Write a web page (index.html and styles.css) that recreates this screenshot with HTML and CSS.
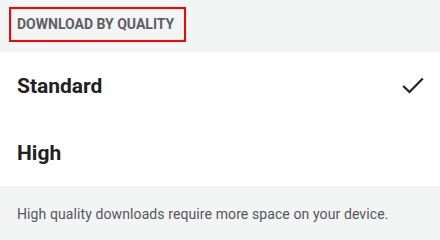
FILE: index.html
```html
<!DOCTYPE html>
<html>
<head>
<meta charset="utf-8">
<link rel="stylesheet" href="styles.css">
</head>
<body>
<div class="page">
  <div class="section-header">
    <span class="section-title">DOWNLOAD BY QUALITY</span>
  </div>
  <ul class="options">
    <li class="option">
      <span class="option-label">Standard</span>
      <svg class="check" width="22" height="17" viewBox="0 0 22 17"><path d="M1.2 9 L7.5 15 L20.8 1.5" fill="none" stroke="#1f2124" stroke-width="2.2"/></svg>
    </li>
    <li class="option">
      <span class="option-label">High</span>
    </li>
  </ul>
  <div class="footer">
    <p class="note">High quality downloads require more space on your device.</p>
  </div>
</div>
</body>
</html>
```
FILE: styles.css
```css
* { box-sizing: border-box; }
html, body { margin: 0; padding: 0; }
body {
  width: 440px;
  height: 238px;
  background: #f3f4f4;
  font-family: Roboto, "Liberation Sans", sans-serif;
  overflow: hidden;
}
.page { display: flex; flex-direction: column; }
.section-header {
  height: 52px;
  background: #f3f4f4;
  padding: 7px 0 0 9px;
}
.section-title {
  display: inline-block;
  border: 2px solid #ff0000;
  height: 35px;
  width: 177px;
  padding: 0 0 0 6px;
  line-height: 31px;
  font-size: 14px;
  font-weight: 700;
  color: #5d6063;
}
.options { list-style: none; margin: 0; padding: 0; background: #fff; }
.option {
  height: 67px;
  display: flex;
  align-items: center;
  justify-content: space-between;
  padding: 0 16px 0 17px;
}
.option-label {
  font-size: 21px;
  font-weight: 700;
  color: #1f2124;
}
.check { display: block; }
.footer { padding: 18px 17px; }
.note {
  margin: 0;
  font-size: 14px;
  color: #55585b;
  line-height: 20px;
  letter-spacing: 0.1px;
}
```
